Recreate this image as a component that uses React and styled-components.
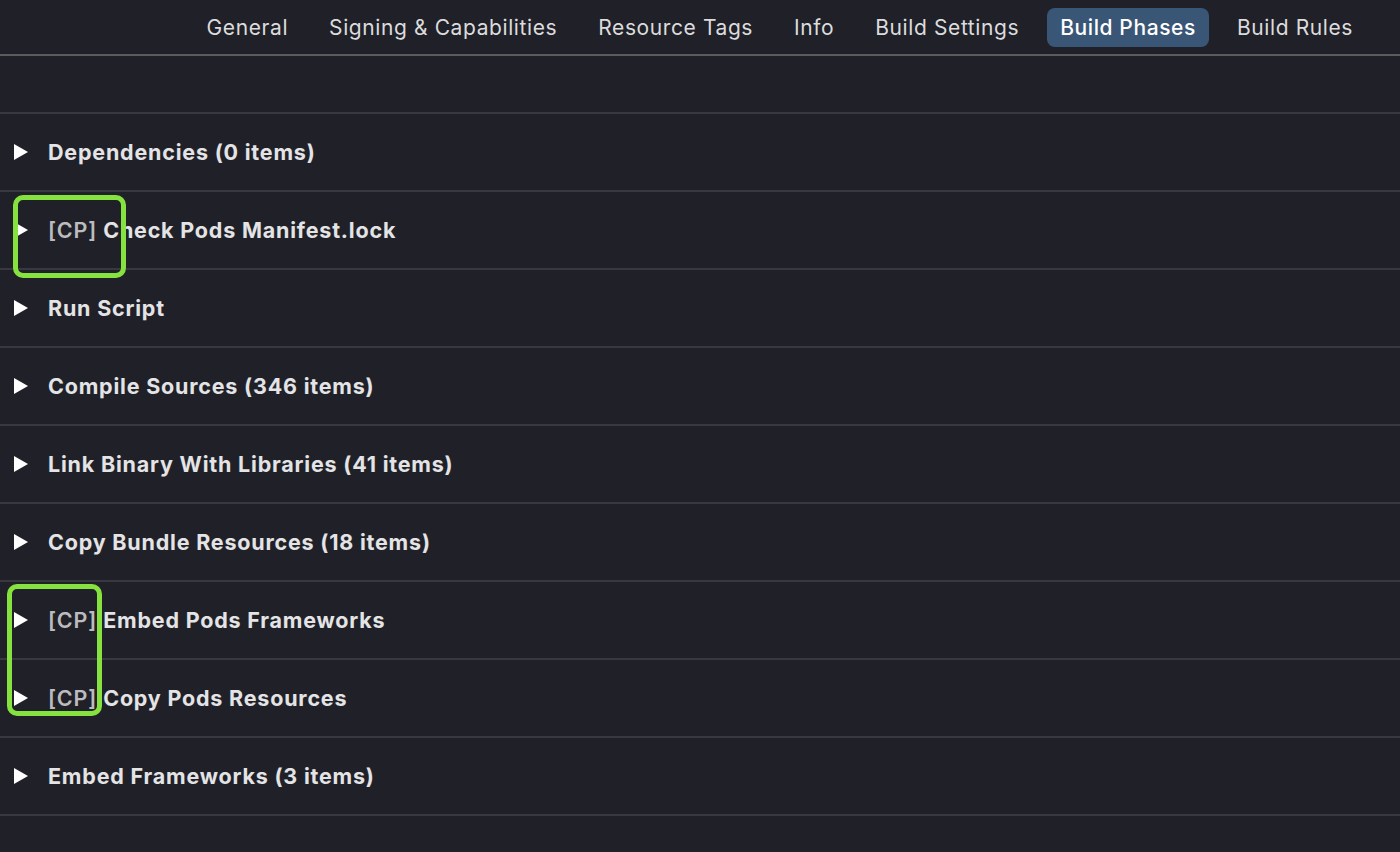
import styled, { createGlobalStyle } from "styled-components";

const GlobalStyle = createGlobalStyle`
   html, body {
      margin: 0;
      padding: 0;
      background: #202128;
   }
   body {
      font-family: Inter, "Noto Sans", "Liberation Sans", sans-serif;
      -webkit-font-smoothing: antialiased;
   }
`;

const Page = styled.div`
   width: 1400px;
   height: 852px;
   overflow: hidden;
   background: #202128;
   color: #e2e2e4;
`;

const TabBar = styled.nav`
   height: 54px;
   display: flex;
   align-items: center;
   justify-content: flex-end;
   gap: 15px;
   padding-right: 34px;
   border-bottom: 2px solid #5b5c60;
`;

const Tab = styled.div`
   height: 39px;
   display: flex;
   align-items: center;
   padding: 0 13px;
   border-radius: 8px;
   font-size: 21px;
   font-weight: ${({ $active }) => ($active ? 500 : 400)};
   color: ${({ $active }) => ($active ? "#ffffff" : "#dcdcde")};
   background: ${({ $active }) => ($active ? "#3a5676" : "transparent")};
   letter-spacing: 0.6px;
`;

const Header = styled.div`
   height: 56px;
   border-bottom: 2px solid #38393e;
`;

const Phases = styled.div`
   position: relative;
`;

const Row = styled.div`
   height: 76px;
   display: flex;
   align-items: center;
   gap: 20px;
   padding-left: 14px;
   border-bottom: 2px solid #38393e;
`;

const Disclosure = styled.svg`
   width: 14px;
   height: 16px;
   flex: none;
`;

const Title = styled.span`
   font-size: 21.5px;
   font-weight: 700;
   color: #e4e4e6;
   letter-spacing: 0.8px;
`;

const Prefix = styled.span`
   color: #bcbcbf;
   font-weight: 600;
`;

const Marker = styled.div`
   position: absolute;
   box-sizing: border-box;
   border: 5px solid #86e23e;
   border-radius: 10px;
   pointer-events: none;
`;

const tabs = [
   "General",
   "Signing & Capabilities",
   "Resource Tags",
   "Info",
   "Build Settings",
   "Build Phases",
   "Build Rules",
];

const phases = [
   { name: "Dependencies (0 items)" },
   { cp: true, name: "Check Pods Manifest.lock" },
   { name: "Run Script" },
   { name: "Compile Sources (346 items)" },
   { name: "Link Binary With Libraries (41 items)" },
   { name: "Copy Bundle Resources (18 items)" },
   { cp: true, name: "Embed Pods Frameworks" },
   { cp: true, name: "Copy Pods Resources" },
   { name: "Embed Frameworks (3 items)" },
];

function Triangle() {
   return (
      <Disclosure viewBox="0 0 14 16">
         <path d="M0 0 L14 8 L0 16 Z" fill="#ffffff" />
      </Disclosure>
   );
}

export default function App() {
   return (
      <Page>
         <GlobalStyle />
         <TabBar>
            {tabs.map((t) => (
               <Tab key={t} $active={t === "Build Phases"}>
                  {t}
               </Tab>
            ))}
         </TabBar>
         <Header />
         <Phases>
            {phases.map((p) => (
               <Row key={p.name}>
                  <Triangle />
                  <Title>
                     {p.cp && <Prefix>[CP] </Prefix>}
                     {p.name}
                  </Title>
               </Row>
            ))}
            <Marker style={{ left: 13, top: 81, width: 113, height: 83 }} />
            <Marker style={{ left: 7, top: 470, width: 95, height: 132 }} />
         </Phases>
      </Page>
   );
}
